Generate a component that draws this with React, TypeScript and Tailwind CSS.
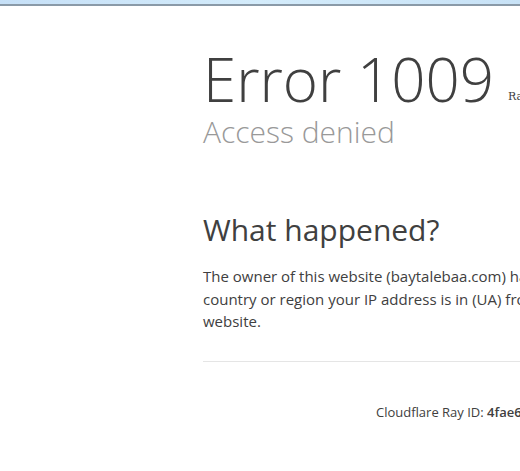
export default function App() {
  return (
    <div className="w-screen h-screen overflow-hidden bg-white font-['Open_Sans',sans-serif] text-[#404040]">
      {/* top bar */}
      <div className="h-[4px] bg-gradient-to-r from-[#c6e0f7] via-[#d4ecfb] to-[#c8e2f6]" />
      <div className="h-[2px] bg-[#8a9aa8]" />

      <div className="pl-[203px] w-[1000px]">
        <div className="pt-[37px] flex items-baseline">
          <h1 className="text-[60px] leading-[72px] font-light">Error 1009</h1>
          <small className="ml-[14px] -translate-y-[2px] text-[11px] font-['DejaVu_Serif',serif] text-[#404040] whitespace-nowrap">
            Ray ID: 4fae6b2d8c1e3a7f &bull; 2019-07-22 10:14:32 UTC
          </small>
        </div>
        <h2 className="text-[30px] leading-[36px] font-light text-[#999999] -mt-[1px]">Access denied</h2>

        <div className="w-[455px] mt-[60px]">
          <h2 className="text-[30px] leading-[40px] font-normal">What happened?</h2>
          <p className="mt-[15px] text-[15px] leading-[22.5px] text-[#404040]">
            The owner of this website (baytalebaa.com) has banned the country or region your IP address is in (UA) from accessing this website.
          </p>
        </div>

        <div className="mt-[28px] w-[760px] border-t border-[#e5e5e5]" />

        <div className="pt-[41px] pl-[173px] text-[13px] text-[#404040] whitespace-nowrap">
          Cloudflare Ray ID: <strong className="font-semibold">4fae6b2d8c1e3a7f</strong> &bull; Your IP: 93.72.14.201 &bull; Performance &amp; security by Cloudflare
        </div>
      </div>
    </div>
  )
}
